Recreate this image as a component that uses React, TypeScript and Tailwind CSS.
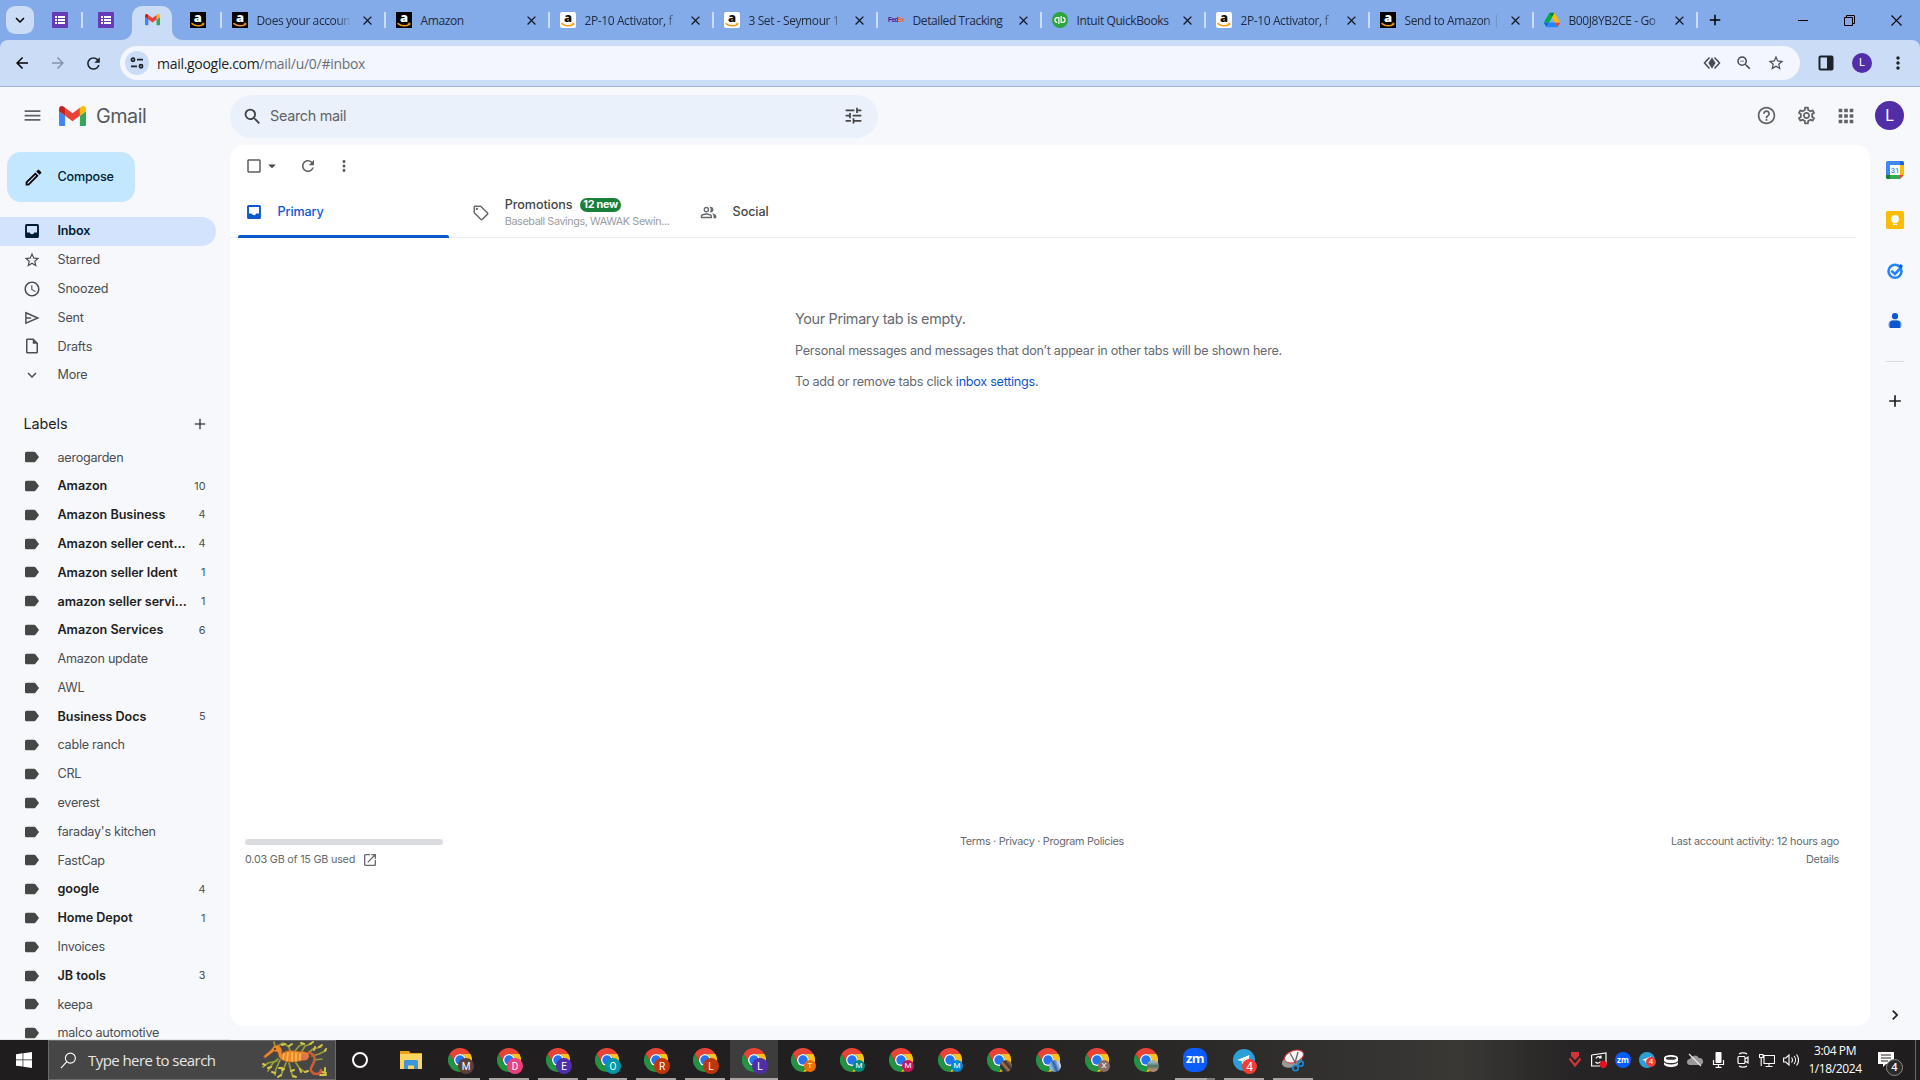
import React from 'react';
import {
  MdAccessTime,
  MdAdd,
  MdApps,
  MdArrowBack,
  MdArrowDropDown,
  MdArrowForward,
  MdCheckBoxOutlineBlank,
  MdClose,
  MdHelpOutline,
  MdKeyboardArrowDown,
  MdKeyboardArrowRight,
  MdMenu,
  MdMoreVert,
  MdOpenInNew,
  MdOutlineEdit,
  MdOutlineInsertDriveFile,
  MdOutlinePeopleAlt,
  MdOutlineSell,
  MdOutlineSettings,
  MdRefresh,
  MdSearch,
  MdStarBorder,
  MdTune,
  MdZoomOut,
} from 'react-icons/md';

const InboxIcon = ({ className }: { className?: string }) => (
  <svg viewBox="0 0 20 20" className={className}>
    <path d="M4 2.300h12A1.700 1.700 0 0117.700 4v12a1.700 1.700 0 01-1.700 1.700H4A1.700 1.700 0 012.300 16V4A1.700 1.700 0 014 2.300zM4.400 4.400v7.200h3.100a2.600 2.600 0 005 0h3.100V4.400z" fill="currentColor" fillRule="evenodd" />
  </svg>
);

const SentIcon = ({ className }: { className?: string }) => (
  <svg viewBox="0 0 20 20" className={className} fill="none" stroke="currentColor" strokeWidth="1.600">
    <path d="M3.200 4.200L16.500 10 3.200 15.800z" />
    <path d="M3.200 10H9" />
  </svg>
);

const LabelIcon = ({ className }: { className?: string }) => (
  <svg viewBox="0 0 18 18" className={className}>
    <path d="M3.500 3.800h7.700c.6 0 1.100.3 1.400.7L16 9l-3.400 4.500c-.3.400-.8.7-1.400.7H3.500A1.500 1.500 0 012 12.700V5.300a1.500 1.500 0 011.500-1.500z" fill="#444746" />
  </svg>
);

const AmazonIcon = ({ dark }: { dark?: boolean }) => (
  <svg viewBox="0 0 16 16" className="size-4 shrink-0">
    <rect width="16" height="16" rx={dark ? 0 : 2} fill={dark ? '#000' : '#fff'} />
    <text x="7.8" y="10.3" textAnchor="middle" fontFamily="Open Sans" fontWeight="800" fontSize="13" fill={dark ? '#fff' : '#111'}>a</text>
    <path d="M2 11.6c3.4 2.8 8.3 2.9 11.4.7" fill="none" stroke="#f79a1b" strokeWidth="1.5" strokeLinecap="round" />
    <path d="M11.7 11.3l2.4-.1-.6 2" fill="none" stroke="#f79a1b" strokeWidth="0.9" />
  </svg>
);

const FormsIcon = () => (
  <svg viewBox="0 0 16 16" className="size-4 shrink-0">
    <rect width="16" height="16" rx="1" fill="#673ab7" />
    <path d="M3 4h2v2H3zM6 4h7v2H6zM3 7h2v2H3zM6 7h7v2H6zM3 10h2v2H3zM6 10h7v2H6z" fill="#fff" />
  </svg>
);

const GmailIcon = ({ className }: { className: string }) => (
  <svg viewBox="52 42 88 66" className={className}>
    <path fill="#4285f4" d="M58 108h14V74L52 59v43c0 3.32 2.69 6 6 6" />
    <path fill="#34a853" d="M120 108h14c3.32 0 6-2.69 6-6V59l-20 15" />
    <path fill="#fbbc04" d="M120 48v26l20-15v-8c0-7.42-8.47-11.65-14.4-7.2" />
    <path fill="#ea4335" d="M72 74V48l24 18 24-18v26L96 92" />
    <path fill="#c5221f" d="M52 51v8l20 15V48l-5.6-4.2c-5.94-4.45-14.4-.22-14.4 7.2" />
  </svg>
);

const FedexIcon = () => (
  <svg viewBox="0 0 16 16" className="size-4 shrink-0">
    <text x="0" y="10" fontFamily="Liberation Sans" fontWeight="700" fontSize="6.500" letterSpacing="-0.5" fill="#4d148c">Fed</text>
    <text x="9.2" y="10" fontFamily="Liberation Sans" fontWeight="700" fontSize="6.500" letterSpacing="-0.5" fill="#ff6200">Ex</text>
  </svg>
);

const QuickBooksIcon = () => (
  <svg viewBox="0 0 16 16" className="size-4 shrink-0">
    <circle cx="8" cy="8" r="8" fill="#2ca53a" />
    <path d="M6.900 12V5.600H5.300a2.400 2.400 0 000 4.800M9.100 4v6.400h1.600a2.400 2.400 0 000-4.800" fill="none" stroke="#fff" strokeWidth="1.200" />
  </svg>
);

const DriveIcon = () => (
  <svg viewBox="0 0 87.3 78" className="size-4 shrink-0">
    <path d="m6.6 66.85 3.85 6.65c.8 1.4 1.95 2.5 3.3 3.3l13.75-23.8h-27.5c0 1.55.4 3.1 1.2 4.5z" fill="#0066da" />
    <path d="m43.65 25-13.75-23.8c-1.35.8-2.5 1.9-3.3 3.3l-25.4 44a9.06 9.06 0 0 0-1.2 4.5h27.5z" fill="#00ac47" />
    <path d="m73.55 76.8c1.35-.8 2.5-1.9 3.3-3.3l1.6-2.75 7.65-13.25c.8-1.4 1.2-2.95 1.2-4.5h-27.5l5.85 11.5z" fill="#ea4335" />
    <path d="m43.65 25 13.75-23.8c-1.35-.8-2.9-1.2-4.5-1.2h-18.5c-1.6 0-3.15.45-4.5 1.2z" fill="#00832d" />
    <path d="m59.8 53h-32.3l-13.75 23.8c1.35.8 2.9 1.2 4.5 1.2h50.8c1.6 0 3.15-.45 4.5-1.2z" fill="#2684fc" />
    <path d="m73.4 26.5-12.7-22c-.8-1.4-1.95-2.5-3.3-3.3l-13.75 23.8 16.15 28h27.45c0-1.55-.4-3.1-1.2-4.5z" fill="#ffba00" />
  </svg>
);

interface BrowserTab {
  title: string;
  icon: React.ReactNode;
  long?: boolean;
}

const browserTabs: BrowserTab[] = [
  { title: 'Does your accoun', icon: <AmazonIcon dark />, long: true },
  { title: 'Amazon', icon: <AmazonIcon dark /> },
  { title: '2P-10 Activator, f', icon: <AmazonIcon />, long: true },
  { title: '3 Set - Seymour 1', icon: <AmazonIcon />, long: true },
  { title: 'Detailed Tracking', icon: <FedexIcon /> },
  { title: 'Intuit QuickBooks', icon: <QuickBooksIcon /> },
  { title: '2P-10 Activator, f', icon: <AmazonIcon />, long: true },
  { title: 'Send to Amazon |', icon: <AmazonIcon dark />, long: true },
  { title: 'B00J8YB2CE - Go', icon: <DriveIcon />, long: true },
];

const TabStrip = () => (
  <div className="flex h-10 items-center bg-[#84abe9] text-[#1f2a3c]">
    <div className="ml-[6px] flex h-7 w-7 items-center justify-center rounded-[9px] bg-[#cbdcf7]">
      <MdKeyboardArrowDown className="size-[18px] text-black" />
    </div>
    <div className="ml-[18px] flex w-[31px] items-center justify-between">
      <FormsIcon />
      <span className="h-4 w-[2px] bg-[#cbdcf7]" />
    </div>
    <div className="ml-[15px]">
      <FormsIcon />
    </div>
    <div className="ml-2 flex h-10 items-end">
      <svg viewBox="0 0 10 10" className="size-[10px]">
        <path d="M10 0v10H0A10 10 0 0010 0z" fill="#cbdcf7" />
      </svg>
      <div className="flex h-[34px] w-10 items-center justify-center rounded-t-[10px] bg-[#cbdcf7] pb-[6px]">
        <GmailIcon className="w-[15px]" />
      </div>
      <svg viewBox="0 0 10 10" className="size-[10px]">
        <path d="M0 0v10h10A10 10 0 010 0z" fill="#cbdcf7" />
      </svg>
    </div>
    <div className="ml-2 flex w-[32px] items-center justify-between">
      <AmazonIcon dark />
      <span className="h-4 w-[2px] bg-[#cbdcf7]" />
    </div>
    {browserTabs.map((tab, i) => (
      <div key={i} className="flex w-[164px] shrink-0 items-center pl-[10px] font-['Open_Sans',sans-serif] text-[12px] tracking-[-0.4px]">
        {tab.icon}
        <span className={`mt-px ml-[8.500px] w-[95px] whitespace-nowrap ${tab.long ? '[mask-image:linear-gradient(to_right,#000_84%,transparent_100%)]' : ''}`}>{tab.title}</span>
        <MdClose className="ml-2 size-[15px] shrink-0 text-[#111827]" />
        <span className="ml-auto h-4 w-[2px] bg-[#cbdcf7]" />
      </div>
    ))}
    <MdAdd className="ml-2 size-[18px] text-black" />
    <div className="ml-auto flex items-center">
      <span className="mr-[36px] h-px w-[10px] bg-black" />
      <svg viewBox="0 0 11 11" className="mr-[36px] size-[11px]">
        <path d="M.5 2.500h8v8h-8zM2.500 2.500v-2h8v8h-2" fill="none" stroke="#000" />
      </svg>
      <svg viewBox="0 0 11 11" className="mr-[18px] size-[11px]">
        <path d="M.5.500l10 10M10.500.500l-10 10" stroke="#000" strokeWidth="1.100" />
      </svg>
    </div>
  </div>
);

const AddressBar = () => (
  <div className="bg-[#84abe9]">
    <div className="flex h-[47px] items-center rounded-t-[8px] border-b border-[#a3b2cf] bg-[#cbdcf7] text-[#1f2329]">
      <MdArrowBack className="ml-[13px] size-[18px] text-black" />
      <MdArrowForward className="ml-[18px] size-[18px] text-[#8593ab]" />
      <MdRefresh className="ml-[17px] size-[19px]" />
      <div className="ml-[17px] flex h-[34px] w-[1680px] items-center rounded-full bg-[#f3f7fd] pl-[5px] font-['Open_Sans',sans-serif]">
        <span className="flex size-6 items-center justify-center rounded-full bg-[#cbdcf7]">
          <svg viewBox="0 0 14 12" className="h-3 w-[14px]" fill="none" stroke="#1f2329" strokeWidth="1.700">
            <circle cx="3" cy="2.700" r="1.600" />
            <path d="M7 2.700h6M1 9.300h6" />
            <circle cx="11" cy="9.300" r="1.600" />
          </svg>
        </span>
        <span className="ml-2 text-[14px] tracking-[-0.29px] text-[#1b1e23]">
          mail.google.com<span className="text-[#6a6f78]">/mail/u/0/#inbox</span>
        </span>
        <div className="ml-auto flex items-center gap-[14px] pr-[15px] text-[#474b52]">
          <svg viewBox="0 0 18 14" className="h-[14px] w-[18px]" fill="none" stroke="currentColor" strokeWidth="1.500">
            <path d="M6.500 1.500L1.500 7l5 5.500M11.500 1.500l5 5.500-5 5.500" />
            <path d="M9 1l3.800 6L9 13 5.200 7z" fill="currentColor" stroke="#f3f7fd" strokeWidth=".4" />
          </svg>
          <MdZoomOut className="size-[18px]" />
          <MdStarBorder className="size-[18px]" />
        </div>
      </div>
      <svg viewBox="0 0 16 16" className="ml-[18px] size-4">
        <rect x="1.500" y="1.500" width="13" height="13" rx="1" fill="none" stroke="#1f2329" strokeWidth="2" />
        <path d="M9 1h6v14H9z" fill="#1f2329" />
      </svg>
      <span className="ml-[18px] flex size-5 items-center justify-center rounded-full bg-[#512da8] font-[Roboto,sans-serif] text-[11px] text-white">L</span>
      <MdMoreVert className="ml-4 size-5" />
    </div>
  </div>
);

const GmailHeader = () => (
  <div className="flex h-[58px] items-center text-[#5f6368]">
    <MdMenu className="mb-px ml-[22px] size-[21px]" />
    <GmailIcon className="ml-4 w-[27px]" />
    <span className="mt-[2px] ml-[10px] w-[134px] font-[Inter,sans-serif] text-[19.8px] tracking-[-0.5px] text-[#555a60]">Gmail</span>
    <div className="flex h-[43px] w-[648px] items-center rounded-full bg-[#eaf1fb] pr-[14px] pl-3">
      <MdSearch className="size-[21px] text-[#3c4043]" />
      <span className="ml-[7px] font-[Inter,sans-serif] text-[14.4px] tracking-[-0.3px]">Search mail</span>
      <MdTune className="mb-px ml-auto size-[21px] text-[#444746]" />
    </div>
    <div className="ml-auto flex items-center pr-[16px]">
      <MdHelpOutline className="mb-px size-[21px]" />
      <MdOutlineSettings className="mb-px ml-[19px] size-[21px]" />
      <MdApps className="mb-px ml-[18px] size-[22px]" />
      <span className="mb-px ml-[18px] flex size-[29px] items-center justify-center rounded-full bg-[#512da8] font-[Roboto,sans-serif] text-[16px] text-white">L</span>
    </div>
  </div>
);

const folders = [
  { name: 'Inbox', icon: InboxIcon },
  { name: 'Starred', icon: MdStarBorder },
  { name: 'Snoozed', icon: MdAccessTime },
  { name: 'Sent', icon: SentIcon },
  { name: 'Drafts', icon: MdOutlineInsertDriveFile },
  { name: 'More', icon: MdKeyboardArrowDown },
];

const labels: { name: string; count?: number }[] = [
  { name: 'aerogarden' },
  { name: 'Amazon', count: 10 },
  { name: 'Amazon Business', count: 4 },
  { name: 'Amazon seller cent...', count: 4 },
  { name: 'Amazon seller Ident', count: 1 },
  { name: 'amazon seller servi...', count: 1 },
  { name: 'Amazon Services', count: 6 },
  { name: 'Amazon update' },
  { name: 'AWL' },
  { name: 'Business Docs', count: 5 },
  { name: 'cable ranch' },
  { name: 'CRL' },
  { name: 'everest' },
  { name: "faraday's kitchen" },
  { name: 'FastCap' },
  { name: 'google', count: 4 },
  { name: 'Home Depot', count: 1 },
  { name: 'Invoices' },
  { name: 'JB tools', count: 3 },
  { name: 'keepa' },
  { name: 'malco automotive' },
];

const Sidebar = () => (
  <div className="flex h-[895px] w-[230px] shrink-0 flex-col overflow-hidden border-b border-[#e3e5e9] text-[12.6px] text-[#4b4e50]">
    <div className="mt-[7px] ml-[7px] flex h-[50px] w-32 shrink-0 items-center rounded-[14px] bg-[#c2e7ff] pl-4 text-[#001d35]">
      <MdOutlineEdit className="size-[21px] text-black" />
      <span className="ml-[13.500px] font-medium tracking-[-0.2px]">Compose</span>
    </div>
    <div className="mt-[15.400px] shrink-0">
      {folders.map(({ name, icon: Icon }, i) => (
        <div
          key={name}
          className={`flex h-[28.8px] w-[216px] items-center rounded-r-full pl-[23px] ${i === 0 ? 'bg-[#d3e3fd] font-semibold text-[#001d35]' : ''}`}
        >
          <Icon className="mb-px size-[18px]" />
          <span className="ml-[16.500px] tracking-[-0.2px]">{name}</span>
        </div>
      ))}
    </div>
    <div className="mt-[15px] flex h-[38px] shrink-0 items-center justify-between pr-[21px] pl-[23.500px]">
      <span className="text-[14.4px] tracking-[-0.1px] text-[#1f1f1f]">Labels</span>
      <MdAdd className="size-[18px]" />
    </div>
    <div className="mt-[0.400px] shrink-0">
      {labels.map(({ name, count }) => (
        <div key={name} className="flex h-[28.8px] w-[230px] items-center pr-[24.500px] pl-[23px]">
          <LabelIcon className="mb-[1.500px] size-[18px] shrink-0" />
          <span className={count ? 'ml-[16.500px] whitespace-nowrap font-semibold tracking-[-0.04px] text-[#1f1f1f]' : 'ml-[16.500px] whitespace-nowrap tracking-[-0.24px]'}>{name}</span>
          <span className="ml-auto text-[10.8px]">{count}</span>
        </div>
      ))}
    </div>
  </div>
);

const MailPanel = () => (
  <div className="flex h-[881px] w-[1640px] flex-col rounded-[14px] bg-white text-[#666a6f]">
    <div className="flex h-[42px] items-center pl-[15px] text-[#5b5e61]">
      <MdCheckBoxOutlineBlank className="size-[18px]" />
      <MdArrowDropDown className="size-[18px] text-[#444746]" />
      <MdRefresh className="ml-[18px] size-[18px]" />
      <MdMoreVert className="ml-[18px] size-[18px]" />
    </div>
    <div className="mr-[14px] flex h-[51px] border-b border-[#eceef0] pl-2 text-[12.6px]">
      <div className="relative flex w-[226.800px] items-center pl-[7px] text-[#0b57d0]">
        <InboxIcon className="size-[18px]" />
        <span className="ml-[14.500px] font-medium tracking-[-0.1px]">Primary</span>
        <span className="absolute bottom-[-1px] left-0 h-[3px] w-[211px] rounded-t-[2px] bg-[#0b57d0]" />
      </div>
      <div className="flex w-[226.800px] items-center pl-[7px]">
        <MdOutlineSell className="mt-px size-[18px]" />
        <div className="mt-[4px] ml-[15px] flex flex-col">
          <div className="flex h-[16px] items-center">
            <span className="font-medium tracking-[-0.1px] text-[#444746]">Promotions</span>
            <span className="ml-2 flex h-[14px] items-center rounded-full bg-[#188038] px-[3px] text-[10.8px] font-bold tracking-[-0.25px] text-white">12 new</span>
          </div>
          <span className="flex h-[18px] items-center whitespace-nowrap text-[10.8px] tracking-[-0.4px] text-[#9a9da1]">Baseball Savings, WAWAK Sewin...</span>
        </div>
      </div>
      <div className="flex items-center pl-[8px]">
        <MdOutlinePeopleAlt className="mt-px size-[17px]" />
        <span className="ml-4 font-medium tracking-[-0.08px] text-[#444746]">Social</span>
      </div>
    </div>
    <div className="mt-[66px] ml-[565px] flex flex-col text-[12.6px]">
      <p className="flex h-[30px] items-center text-[14.4px] tracking-[-0.34px]">Your Primary tab is empty.</p>
      <p className="flex h-[34px] items-center tracking-[-0.242px]">Personal messages and messages that don’t appear in other tabs will be shown here.</p>
      <p className="flex h-[29px] items-center tracking-[-0.26px]">
        To add or remove tabs click&nbsp;<span className="text-[#0b57d0]">inbox settings</span>.
      </p>
    </div>
    <div className="mt-[436px] flex items-start justify-between pr-[31px] pl-[15px] text-[10.8px]">
      <div className="w-[715px]">
        <div className="mt-[6px] h-[6px] w-[198px] rounded-full bg-[#dadce0]" />
        <div className="mt-[6px] flex h-[18px] items-center tracking-[-0.22px]">
          0.03 GB of 15 GB used
          <MdOpenInNew className="mb-px ml-[7px] size-4" />
        </div>
      </div>
      <div className="flex h-[18px] flex-1 items-center tracking-[-0.29px]">Terms · Privacy · Program Policies</div>
      <div className="flex flex-col items-end tracking-[-0.25px]">
        <span className="flex h-[18px] items-center">Last account activity: 12 hours ago</span>
        <span className="flex h-[18px] items-center">Details</span>
      </div>
    </div>
  </div>
);

const SidePanel = () => (
  <div className="flex h-[895px] w-[50px] flex-col items-center text-[#1f1f1f]">
    <svg viewBox="0 0 18 18" className="mt-4 size-[18px]">
      <path d="M1.500 0H14v4H4v10H0V1.500A1.500 1.500 0 011.500 0z" fill="#4285f4" />
      <path d="M14 0h2.500A1.500 1.500 0 0118 1.500V4h-4z" fill="#1967d2" />
      <path d="M14 4h4v10h-4z" fill="#fbbc04" />
      <path d="M4 14h10v4H4z" fill="#34a853" />
      <path d="M0 14h4v4H1.500A1.500 1.500 0 010 16.500z" fill="#188038" />
      <path d="M14 14h4l-4 4z" fill="#ea4335" />
      <path d="M4 4h10v10H4z" fill="#fff" />
      <text x="9" y="11.800" textAnchor="middle" fontFamily="Roboto" fontWeight="500" fontSize="7.500" fill="#4285f4">31</text>
    </svg>
    <svg viewBox="0 0 18 18" className="mt-8 size-[18px]">
      <rect width="18" height="18" rx="1.500" fill="#fbbc04" />
      <circle cx="9" cy="8" r="3.900" fill="#fff" />
      <path d="M7 9h4v3H7zM7 12.700h4V14H7z" fill="#fff" />
    </svg>
    <svg viewBox="0 0 18 18" className="mt-[33px] size-[18px]">
      <circle cx="9" cy="9.300" r="6.500" fill="none" stroke="#2684fc" strokeWidth="2.600" />
      <path d="M5.300 8.700L9 12l6.500-7" fill="none" stroke="#2684fc" strokeWidth="2.600" />
      <path d="M12.500 4.500l2-2.400 2.500 2-1.800 2.300z" fill="#0066da" />
    </svg>
    <svg viewBox="0 0 18 18" className="mt-8 size-[18px]">
      <circle cx="9" cy="4.200" r="3.100" fill="#0b57d0" />
      <path d="M6.500 8.500h5c2.500 0 4 1.500 4 4 0 2-.5 3.500-2 3.500h-9c-1.500 0-2-1.500-2-3.500 0-2.500 1.500-4 4-4z" fill="#5b8def" />
      <path d="M7 8.500h4a3 3 0 013 3V16H4v-4.500a3 3 0 013-3z" fill="#0b57d0" />
    </svg>
    <span className="mt-[31px] h-px w-[18px] bg-[#d9dbdf]" />
    <MdAdd className="mt-[29px] size-[20px]" />
    <MdKeyboardArrowRight className="mt-auto mb-[15px] size-[20px]" />
  </div>
);

const ChromeIcon = () => (
  <svg viewBox="0 0 24 24" className="size-6">
    <path d="M1.600 6A12 12 0 0122.400 6H12a6 6 0 00-5.200 9z" fill="#ea4335" />
    <path d="M22.400 6A12 12 0 0112 24l5.200-9A6 6 0 0012 6z" fill="#fbc116" />
    <path d="M12 24A12 12 0 011.600 6l5.200 9a6 6 0 0010.400 0z" fill="#229342" />
    <circle cx="12" cy="12" r="6" fill="#fff" />
    <circle cx="12" cy="12" r="4.700" fill="#2374f2" />
  </svg>
);

interface Profile {
  letter: string;
  badge: string;
  state: 'open' | 'active' | 'pinned';
}

const profiles: Profile[] = [
  { letter: 'M', badge: 'bg-[#5d4037]', state: 'open' },
  { letter: 'D', badge: 'bg-[#ec407a]', state: 'open' },
  { letter: 'E', badge: 'bg-[#512da8]', state: 'open' },
  { letter: 'O', badge: 'bg-[#0097a7]', state: 'open' },
  { letter: 'R', badge: 'bg-[#bf360c]', state: 'open' },
  { letter: 'L', badge: 'bg-[#bf360c]', state: 'open' },
  { letter: 'L', badge: 'bg-[#512da8]', state: 'active' },
  { letter: 'T', badge: 'bg-[#ef6c00]', state: 'pinned' },
  { letter: 'M', badge: 'bg-[#00897b]', state: 'pinned' },
  { letter: 'M', badge: 'bg-[#c2185b]', state: 'pinned' },
  { letter: 'M', badge: 'bg-[#0288d1]', state: 'pinned' },
  { letter: '', badge: 'bg-[linear-gradient(50deg,#2c3240_30%,#b9783f_45%,#2c3240_60%,#a86a35_80%)]', state: 'pinned' },
  { letter: '', badge: 'bg-[linear-gradient(70deg,#8fb4dc_25%,#2d5fa8_50%,#c9d8ea_80%)]', state: 'pinned' },
  { letter: 'X', badge: 'bg-[#8d6e63]', state: 'pinned' },
  { letter: '', badge: 'bg-[linear-gradient(180deg,#9ab0b0_20%,#4a7468_50%,#b08a70_80%)]', state: 'pinned' },
];

const ProfileButton: React.FC<{ profile: Profile }> = ({ profile }) => {
  const { letter, badge, state } = profile;
  const size = state === 'pinned' ? 'left-[25px] top-[20px] size-3 text-[8px]' : 'left-[22px] top-[18px] size-4 text-[10px]';
  return (
    <div className={`relative flex h-10 w-12 shrink-0 items-center justify-center ${state === 'active' ? 'bg-[#3d3d3d]' : ''}`}>
      <ChromeIcon />
      <span className={`absolute flex items-center justify-center rounded-full font-[Roboto,sans-serif] text-white ${size} ${badge}`}>{letter}</span>
      {state === 'open' && <span className="absolute bottom-0 left-1 h-[2px] w-10 bg-[#aaa5a3]" />}
      {state === 'active' && <span className="absolute bottom-0 left-0 h-[2px] w-12 bg-[#aaa5a3]" />}
    </div>
  );
};

const SeaDragon = () => (
  <svg viewBox="0 0 66 38" className="h-[38px] w-[66px]" fill="none" strokeLinecap="round" strokeLinejoin="round">
    <g stroke="#94a034" strokeWidth="1.700">
      <path d="M13 5l-1-4M16 5l5-3M16 18l-5 4-5 8M18 19l-4 9-1 6M24 22l-3 7-2 6M27 22l2 8 2 6M34 22l4 6 5 3M28 10l-1-4-4-3M33 10l4-5 5-2M40 10l3-5 6-2M46 12l5-4 8-2M50 15l7-2 6-3M52 19l8-1M15 20l-9 2-5 4" />
    </g>
    <g stroke="#d3c648" strokeWidth="2">
      <path d="M9 26l-3 1M13 32l-3-1M19 34l-3 2M31 35l3 1M43 31l3-1M23 3l-3 1M27 5l3-2M42 3l-3-1M48 3l3-2M57 6l3-2M63 10l1-2M3 24l-2-1M22 28l-2 1M29 30l3-1M38 28l1 3M60 31l4 1M63 30v-3M58 34l6 0M52 9l1-3M17 27l3 0" />
    </g>
    <path d="M50 31c2 3 9 3 9-2M44 13c6-3 10 2 8 8-2 5-5 7-2 10" stroke="#cf5a3c" strokeWidth="2.600" />
    <path d="M2 15l7-6 3-4 4-1 3 3 1 4-1 2c4-3 9-4 13-3 6 1 10 0 13 2 3 2 2 6-1 7-5 0-9 2-13 2-6 0-11-1-14-5l-1-5-4-1-5 4-4 3z" fill="#ea8a2c" stroke="#cf6624" strokeWidth=".6" />
    <path d="M22 13l-1 5M26 12l-1 8M30 12v8M34 12v8M38 13v6" stroke="#f8c35c" strokeWidth="1.300" />
    <path d="M40 13c3-1 6 1 5 4s-4 2-6 2z" fill="#dc7350" />
    <circle cx="13" cy="8" r=".9" fill="#222" />
  </svg>
);

const TelegramIcon = ({ className }: { className: string }) => (
  <svg viewBox="0 0 24 24" className={className}>
    <circle cx="12" cy="12" r="12" fill="#2a9fd8" />
    <path d="M4.500 12L18 6.500 16 18l-4-3-2 2-.5-4z" fill="#fff" />
    <path d="M9.500 13.500L15 9l-4.500 5.500L10 17z" fill="#b9d8ea" />
  </svg>
);

const Taskbar = () => (
  <div className="flex h-10 items-center bg-[linear-gradient(90deg,#1f1d1d_0%,#211f1f_45%,#2a2928_62%,#393835_76%,#262424_82%,#1f1d1d_100%)] text-white">
    <svg viewBox="0 0 16 16" className="ml-4 size-4">
      <path d="M0 2.200l6.600-.9v6.300H0zM7.300 1.200L16 0v7.600H7.300zM0 8.300h6.600v6.300L0 13.700zM7.300 8.300H16V16l-8.700-1.200z" fill="#fff" />
    </svg>
    <div className="ml-4 flex h-10 w-[288px] items-center border border-[#6b6b6b] bg-[#464646] pl-[11px]">
      <svg viewBox="0 0 18 18" className="size-[17px]" fill="none" stroke="#fff" strokeWidth="1.200">
        <circle cx="11" cy="6.500" r="5.300" />
        <path d="M7.200 10.300L1 17" />
      </svg>
      <span className="ml-[11px] w-[174px] whitespace-nowrap font-['Open_Sans',sans-serif] text-[15px] tracking-[-0.56px] text-[#e6e6e6]">Type here to search</span>
      <SeaDragon />
    </div>
    <div className="flex w-12 justify-center">
      <span className="size-4 rounded-full border-[2.500px] border-white" />
    </div>
    <div className="ml-[2px] flex w-12 justify-center">
      <svg viewBox="0 0 22 18" className="ml-px h-[18px] w-[22px]">
        <path d="M0 0h9l1.500 2H22v4H0z" fill="#e8a317" />
        <path d="M0 3h22v15H0z" fill="#fcd462" />
        <path d="M4 18V10.500a1.500 1.500 0 011.500-1.500h11a1.500 1.500 0 011.500 1.500V18h-4v-3.500H8V18z" fill="#3a95dc" />
      </svg>
    </div>
    <div className="ml-[2px] flex gap-px">
      {profiles.map((profile, i) => (
        <ProfileButton key={i} profile={profile} />
      ))}
      <div className="relative flex h-10 w-12 items-center justify-center">
        <span className="flex size-6 items-center justify-center rounded-[9px] bg-[#0b5cff] pb-[2px] font-['Open_Sans',sans-serif] text-[13px] font-bold tracking-[-0.5px]">zm</span>
        <span className="absolute bottom-0 left-1 h-[2px] w-10 border-r-8 border-[#7d7a79] bg-[#aaa5a3]" />
      </div>
      <div className="relative flex h-10 w-12 items-center justify-center">
        <TelegramIcon className="size-[22px]" />
        <span className="absolute top-[19px] left-[22px] flex size-[15px] items-center justify-center rounded-full bg-[#f23c34] font-[Roboto,sans-serif] text-[12px]">4</span>
        <span className="absolute bottom-0 left-1 h-[2px] w-10 bg-[#aaa5a3]" />
      </div>
      <div className="relative flex h-10 w-12 items-center justify-center">
        <svg viewBox="0 0 24 24" className="size-6" fill="none">
          <ellipse cx="11" cy="13" rx="10.500" ry="6" fill="#9a9a9a" transform="rotate(-20 11 13)" />
          <ellipse cx="13" cy="8.500" rx="10" ry="5.800" fill="#f6f6f6" stroke="#d9333b" transform="rotate(-20 13 8.500)" />
          <path d="M9 5l6 11M17 4l-3 11" stroke="#666" strokeWidth="1.300" />
          <circle cx="19.500" cy="15.500" r="2.700" stroke="#1c86d1" strokeWidth="1.700" />
          <circle cx="14.500" cy="20" r="2.700" stroke="#1c86d1" strokeWidth="1.700" />
        </svg>
        <span className="absolute bottom-0 left-1 h-[2px] w-10 bg-[#aaa5a3]" />
      </div>
    </div>
    <div className="ml-auto flex items-center">
      <div className="flex items-center gap-2">
        <svg viewBox="0 0 16 16" className="size-4">
          <path d="M4 0h8v4l-4 4-4-4z" fill="#d13438" />
          <path d="M2.500 6.500L8 13.500l5.500-7" fill="none" stroke="#d13438" strokeWidth="2.200" />
        </svg>
        <svg viewBox="0 0 16 16" className="size-4" fill="none" stroke="#fff" strokeWidth="1.200">
          <path d="M.6 3L15 1v12M.6 3v11H9" />
          <path d="M10 5.500a3 3 0 00-5 1M4.500 10a3 3 0 005-.5M10 3.500v2.500H8" />
          <circle cx="12.300" cy="12.300" r="3.600" fill="#e81123" stroke="none" />
        </svg>
        <span className="flex size-4 items-center justify-center rounded-full bg-[#0b5cff] pb-px font-['Open_Sans',sans-serif] text-[8px] font-bold">zm</span>
        <span className="relative">
          <TelegramIcon className="size-4" />
          <span className="absolute top-[5px] left-[7px] flex size-[10px] items-center justify-center rounded-full bg-[#f23c34] font-[Roboto,sans-serif] text-[8px]">4</span>
        </span>
        <svg viewBox="0 0 16 16" className="mt-[2px] size-4">
          <path d="M1 5c0-4 14-4 14 0v6c0 4-14 4-14 0z" fill="#fff" />
          <ellipse cx="8" cy="5.300" rx="5.200" ry="1.500" fill="#333" />
          <path d="M1 8.500c2 3 12 3 14 0" fill="none" stroke="#333" strokeWidth="1.300" />
        </svg>
        <svg viewBox="0 0 16 16" className="size-4">
          <path d="M3 13a3 3 0 010-6 5 5 0 019-1 3.500 3.500 0 011 7z" fill="#9a9a9a" />
          <path d="M2 2l12 12" stroke="#e8e8e8" strokeWidth="1.200" />
        </svg>
        <svg viewBox="0 0 16 16" className="size-4">
          <rect x="4.500" y="0" width="6" height="11" rx="1" fill="#fff" />
          <path d="M2.500 8v4.500h10V8M7.500 12.500V15M4.500 15.400h6" fill="none" stroke="#fff" strokeWidth="1.200" />
        </svg>
        <svg viewBox="0 0 16 16" className="size-4" fill="none" stroke="#fff" strokeWidth="1.200">
          <rect x="3" y="4.500" width="7" height="7" rx="1" />
          <path d="M10 7l3-2v6l-3-2M4 2c2-1.500 6-1.500 8 0M4 14c2 1.500 6 1.500 8 0" />
        </svg>
        <svg viewBox="0 0 16 16" className="size-4" fill="none" stroke="#fff" strokeWidth="1.100">
          <path d="M5 3.500h10.500v8H5zM.5 2.500h3.500v3H.5zM2.200 5.500V14M10 11.500V14M6.500 14.500h7" />
        </svg>
        <svg viewBox="0 0 16 16" className="size-4" fill="none" stroke="#fff" strokeWidth="1.100">
          <path d="M.6 6v4h2.200L6 13V3L2.800 6zM8.500 5.500a4 4 0 010 5M11 4a6 6 0 010 8M13.500 2.500a8.500 8.500 0 010 11" />
        </svg>
      </div>
      <div className="ml-[9px] flex w-[54px] flex-col items-center whitespace-nowrap font-['Open_Sans',sans-serif] text-[12px] leading-[18px] tracking-[-0.4px]">
        <span>3:04 PM</span>
        <span>1/18/2024</span>
      </div>
      <div className="relative ml-[16px] h-10 w-[37px]">
        <svg viewBox="0 0 16 16" className="mt-3 size-4">
          <path d="M0 0h16v12H8l-3 3v-3H0z" fill="#fff" />
          <path d="M3 3h10M3 6h10M3 9h7" stroke="#222" />
        </svg>
        <span className="absolute top-[19px] left-[8px] flex size-[17px] items-center justify-center rounded-full border border-[#8b8b8b] bg-[#2b2b2b] font-['Open_Sans',sans-serif] text-[11px] font-semibold">4</span>
      </div>
      <span className="mr-1 h-10 w-px bg-[#6a6a6a]" />
    </div>
  </div>
);

export default function App() {
  return (
    <div className="flex h-[1080px] w-[1920px] flex-col overflow-hidden bg-[#f6f8fc] font-[Inter,sans-serif]">
      <TabStrip />
      <AddressBar />
      <GmailHeader />
      <div className="flex h-[895px]">
        <Sidebar />
        <MailPanel />
        <SidePanel />
      </div>
      <Taskbar />
    </div>
  );
}
